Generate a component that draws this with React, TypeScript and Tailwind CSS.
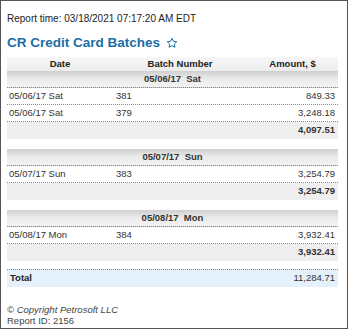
import React from 'react'

interface Row {
  date: string
  batch: string
  amount: string
}

interface Group {
  label: string
  rows: Row[]
  subtotal: string
}

const groups: Group[] = [
  {
    label: '05/06/17  Sat',
    rows: [
      { date: '05/06/17 Sat', batch: '381', amount: '849.33' },
      { date: '05/06/17 Sat', batch: '379', amount: '3,248.18' },
    ],
    subtotal: '4,097.51',
  },
  {
    label: '05/07/17  Sun',
    rows: [{ date: '05/07/17 Sun', batch: '383', amount: '3,254.79' }],
    subtotal: '3,254.79',
  },
  {
    label: '05/08/17  Mon',
    rows: [{ date: '05/08/17 Mon', batch: '384', amount: '3,932.41' }],
    subtotal: '3,932.41',
  },
]

const cols = 'grid grid-cols-[106px_134px_91px]'

const Star = () => (
  <svg width="12" height="12" viewBox="0 0 24 24" fill="none" stroke="#1c6ea4" strokeWidth="2" strokeLinejoin="round">
    <path d="M12 2.5l2.9 6.1 6.6.8-4.9 4.6 1.3 6.6L12 17.3l-5.9 3.3 1.3-6.6-4.9-4.6 6.6-.8z" />
  </svg>
)

export default function App() {
  return (
    <div className="h-[329px] w-[348px] overflow-hidden border border-[#555] bg-white pl-[6px] pt-[12px] font-['Liberation_Sans',Arial,sans-serif] text-[#333]">
      <div className="text-[10px] leading-[12px] text-[#222]">Report time: 03/18/2021 07:17:20 AM EDT</div>
      <div className="mt-[9px] flex items-center gap-[6px] text-[13.5px] font-bold leading-[17px] text-[#1c6ea4]">
        <span>CR Credit Card Batches</span>
        <Star />
      </div>

      <div className="mt-[6px] w-[331px] text-[9.5px]">
        {/* Header */}
        <div className={`${cols} h-[14px] items-center bg-gradient-to-b from-[#f7f7f7] to-[#ececec] font-bold text-[#222]`}>
          <div className="text-center">Date</div>
          <div className="text-center">Batch Number</div>
          <div className="text-center">Amount, $</div>
        </div>

        {groups.map((g, gi) => (
          <div key={g.label} className={gi > 0 ? 'mt-[10px]' : ''}>
            <div className="flex h-[17px] items-center justify-center whitespace-pre border-b border-dotted border-[#888] bg-gradient-to-b from-[#cfcfcf] via-[#ebebeb] to-[#f3f3f3] font-bold text-[#333]">
              {g.label}
            </div>
            {g.rows.map((r, ri) => (
              <div key={ri} className={`${cols} h-[17px] items-center border-b border-dotted border-[#888]`}>
                <div className="pl-[2px]">{r.date}</div>
                <div className="pl-[3px]">{r.batch}</div>
                <div className="pr-[3px] text-right">{r.amount}</div>
              </div>
            ))}
            <div className="flex h-[17px] items-center justify-end bg-[#efefef] pr-[3px] font-bold">{g.subtotal}</div>
          </div>
        ))}

        <div className="mt-[8px] flex h-[18px] items-center justify-between border-t border-dotted border-[#888] bg-[#e4f1fb] px-[3px]">
          <span className="font-bold text-[#222]">Total</span>
          <span>11,284.71</span>
        </div>
      </div>

      <div className="mt-[17px] text-[9.5px] leading-[11px] text-[#444]">
        <div className="italic">© Copyright Petrosoft LLC</div>
        <div>Report ID: 2156</div>
      </div>
    </div>
  )
}
